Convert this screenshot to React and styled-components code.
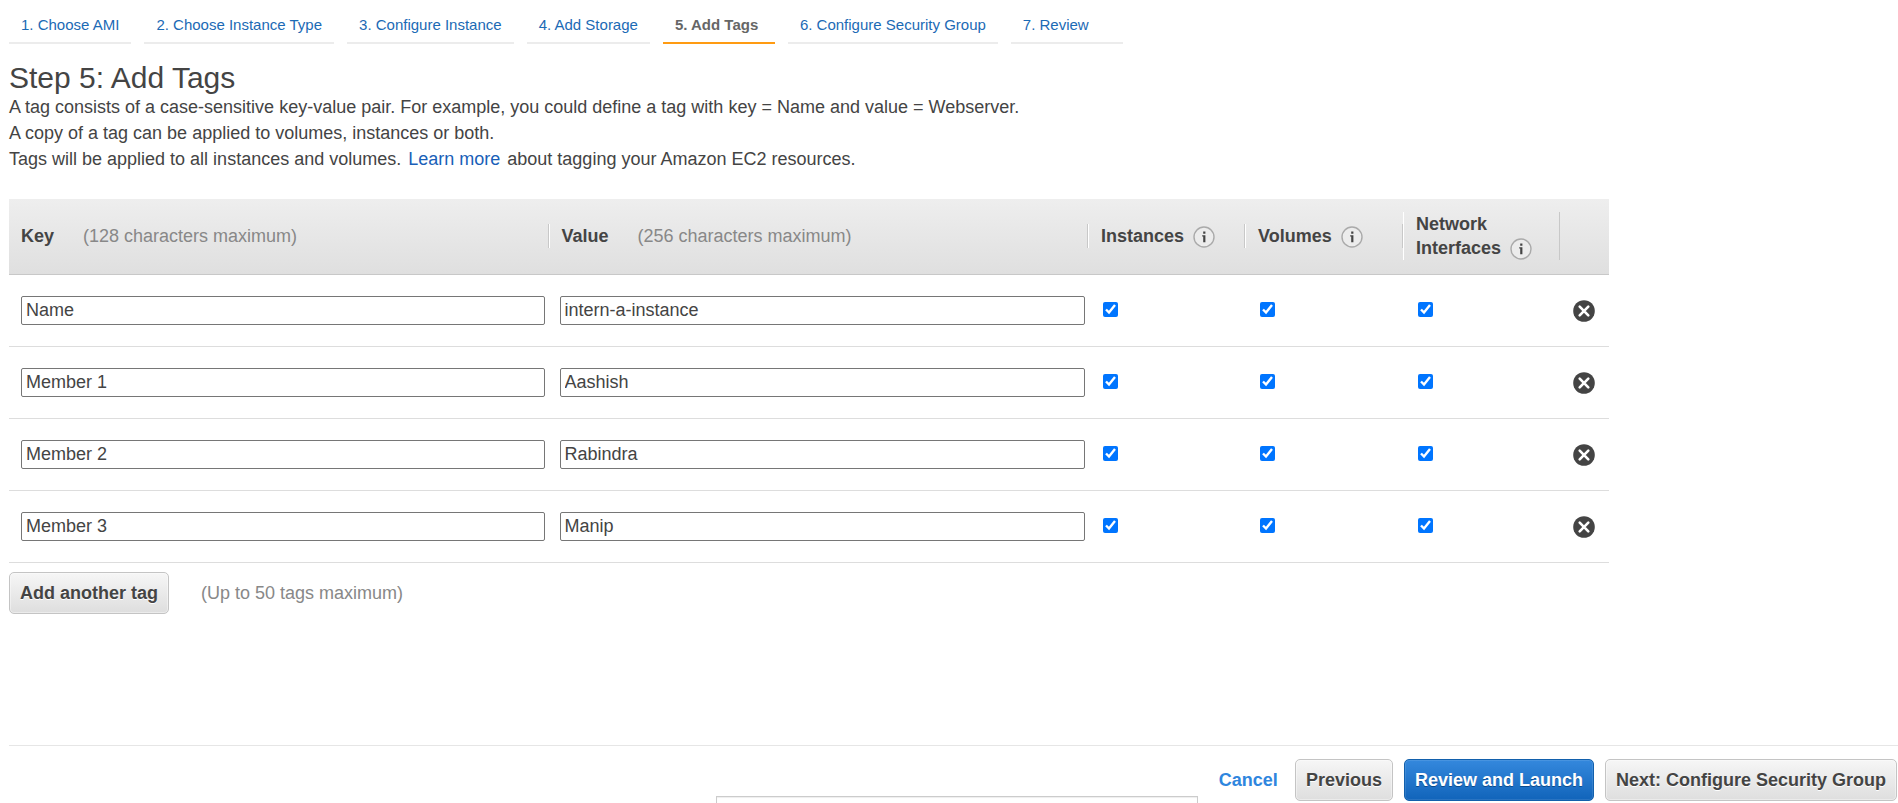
import React, { useState } from "react";
import styled, { createGlobalStyle, css } from "styled-components";

const GlobalStyle = createGlobalStyle`
  * { box-sizing: border-box; }
  body {
    margin: 0;
    background: #fff;
    color: #444;
    font-family: "Liberation Sans", Arial, sans-serif;
    font-size: 18px;
    line-height: 26px;
  }
`;

const Page = styled.div`
  display: flex;
  flex-direction: column;
  min-height: 100vh;
  padding-left: 9px;
`;

const Steps = styled.nav`
  display: flex;
  gap: 13px;
  padding-top: 7px;
`;

const StepLink = styled.a`
  min-width: 112px;
  padding: 6px 12px 5px;
  border-bottom: 2px solid ${(p) => (p.$active ? "#ff9b12" : "#ececec")};
  color: ${(p) => (p.$active ? "#666" : "#1b6ab5")};
  font-size: 15px;
  font-weight: ${(p) => (p.$active ? "bold" : "normal")};
  line-height: 24px;
  text-decoration: none;
  white-space: nowrap;
`;

const Main = styled.main`
  flex: 1;
  padding-top: 17px;
`;

const Title = styled.h1`
  margin: 0;
  font-size: 30px;
  font-weight: normal;
  line-height: 33px;
`;

const Intro = styled.p`
  margin: 0;
`;

const InlineLink = styled.a`
  margin: 0 2px;
  color: #1a5fb8;
  text-decoration: none;
`;

const TagTable = styled.table`
  width: 100%;
  max-width: 1600px;
  margin-top: 27px;
  border-collapse: separate;
  border-spacing: 0;
  table-layout: fixed;
`;

const Col = styled.col`
  width: ${(p) => p.$width};
`;

const HeaderRow = styled.tr`
  height: 76px;
  background: linear-gradient(#eee, #dfdfdf);
`;

const HeaderCell = styled.th`
  padding: 0 0 2px;
  border-bottom: 1px solid #c8c8c8;
  line-height: 24px;
  text-align: left;
`;

const HeaderLabel = styled.div`
  padding-left: 12px;
  border-left: ${(p) => (p.$first ? "0" : "1px solid #fff")};
  border-right: 1px solid #c8c8c8;
`;

const Hint = styled.span`
  margin-left: ${(p) => p.$gap || "29px"};
  color: #888;
  font-weight: normal;
`;

const InfoButton = styled.button`
  width: 22px;
  height: 22px;
  margin-left: 9px;
  padding: 0;
  border: 0;
  background: none;
  vertical-align: -6px;
  svg { display: block; }
`;

const Cell = styled.td`
  height: 72px;
  padding: ${(p) => p.$pad || "0"};
  border-bottom: 1px solid #ddd;
  vertical-align: middle;
`;

const TextField = styled.input`
  display: block;
  width: 100%;
  height: 29px;
  padding: 0 4px;
  border: 1px solid #767676;
  border-radius: 2px;
  color: #444;
  font: inherit;
`;

const Tick = styled.input`
  display: block;
  width: 15px;
  height: 15px;
  margin: 0;
  accent-color: #0075ff;
`;

const RemoveButton = styled.button`
  display: block;
  padding: 0;
  border: 0;
  background: none;
  svg { display: block; }
`;

const AddRow = styled.div`
  display: flex;
  align-items: center;
  margin-top: 9px;
`;

const Button = styled.button`
  height: 42px;
  padding: 0 10px;
  border: 1px solid #c4c4c4;
  border-radius: 5px;
  background: linear-gradient(#f6f6f6, #dedede);
  box-shadow: inset 0 0 0 1px rgba(255, 255, 255, 0.4);
  color: #444;
  font: bold 18px "Liberation Sans", Arial, sans-serif;
  text-shadow: 0 1px 0 #fff;
  white-space: nowrap;
  ${(p) =>
    p.$primary &&
    css`
      border-color: #1260ac;
      background: linear-gradient(#3488dd, #1164ba);
      box-shadow: inset 0 0 0 1px rgba(255, 255, 255, 0.1);
      color: #fff;
      text-shadow: 0 1px 0 #0b4a8c;
    `}
`;

const Footer = styled.footer`
  display: flex;
  align-items: center;
  justify-content: flex-end;
  gap: 11px;
  padding: 13px 1px 2px 0;
  border-top: 1px solid #e6e6e6;
`;

const CancelLink = styled.a`
  margin-right: 6px;
  color: #2f86de;
  font-weight: bold;
  text-decoration: none;
`;

const BottomPopup = styled.div`
  position: fixed;
  bottom: 0;
  left: 50%;
  width: 482px;
  height: 7px;
  margin-left: -233px;
  border: 1px solid #ccc;
  border-bottom: 0;
  background: #fff;
  box-shadow: inset 0 1px 1px #eee;
`;

const steps = [
  "1. Choose AMI",
  "2. Choose Instance Type",
  "3. Configure Instance",
  "4. Add Storage",
  "5. Add Tags",
  "6. Configure Security Group",
  "7. Review",
];

const initialTags = [
  { key: "Name", value: "intern-a-instance" },
  { key: "Member 1", value: "Aashish" },
  { key: "Member 2", value: "Rabindra" },
  { key: "Member 3", value: "Manip" },
];

const targets = ["Instances", "Volumes", "Network Interfaces"];

function Info({ about }) {
  return (
    <InfoButton type="button" aria-label={`About ${about}`}>
      <svg width="22" height="22" viewBox="0 0 22 22">
        <circle cx="11" cy="11" r="10" fill="#ececec" stroke="#aaa" strokeWidth="1.4" />
        <path d="M9.2 9.2h3.2v7h-2.2v-5.8h-1zM10.2 5.6h2.2v2.1h-2.2z" fill="#444" />
      </svg>
    </InfoButton>
  );
}

function RemoveIcon() {
  return (
    <svg width="22" height="22" viewBox="0 0 22 22">
      <circle cx="11" cy="11" r="10.8" fill="#444" />
      <path d="M6.7 6.7l8.6 8.6M15.3 6.7l-8.6 8.6" stroke="#fff" strokeWidth="2.6" strokeLinecap="round" />
    </svg>
  );
}

export default function App() {
  const [tags, setTags] = useState(initialTags);
  const update = (i, patch) =>
    setTags(tags.map((t, n) => (n === i ? { ...t, ...patch } : t)));

  return (
    <Page>
      <GlobalStyle />
      <Steps>
        {steps.map((s, i) => (
          <StepLink key={s} href="#" $active={i === 4}>
            {s}
          </StepLink>
        ))}
      </Steps>
      <Main>
        <Title>Step 5: Add Tags</Title>
        <Intro>
          A tag consists of a case-sensitive key-value pair. For example, you could define a tag with key = Name and value = Webserver.
        </Intro>
        <Intro>A copy of a tag can be applied to volumes, instances or both.</Intro>
        <Intro>
          Tags will be applied to all instances and volumes. <InlineLink href="#">Learn more</InlineLink> about tagging your Amazon EC2 resources.
        </Intro>
        <TagTable>
          <colgroup>
            <Col />
            <Col />
            <Col $width="157px" />
            <Col $width="158px" />
            <Col $width="157px" />
            <Col $width="49px" />
          </colgroup>
          <thead>
            <HeaderRow>
              <HeaderCell scope="col">
                <HeaderLabel $first>
                  Key<Hint>(128 characters maximum)</Hint>
                </HeaderLabel>
              </HeaderCell>
              <HeaderCell scope="col">
                <HeaderLabel>
                  Value<Hint>(256 characters maximum)</Hint>
                </HeaderLabel>
              </HeaderCell>
              {targets.map((t) => (
                <HeaderCell key={t} scope="col">
                  <HeaderLabel>
                    {t}
                    <Info about={t} />
                  </HeaderLabel>
                </HeaderCell>
              ))}
              <HeaderCell />
            </HeaderRow>
          </thead>
          <tbody>
            {tags.map((tag, i) => (
              <tr key={i}>
                <Cell $pad="0 4px 0 12px">
                  <TextField
                    aria-label="Key"
                    value={tag.key}
                    onChange={(e) => update(i, { key: e.target.value })}
                  />
                </Cell>
                <Cell $pad="0 3px 0 11px">
                  <TextField
                    aria-label="Value"
                    value={tag.value}
                    onChange={(e) => update(i, { value: e.target.value })}
                  />
                </Cell>
                {targets.map((t) => (
                  <Cell key={t} $pad="0 0 2px 15px">
                    <Tick type="checkbox" aria-label={t} defaultChecked />
                  </Cell>
                ))}
                <Cell $pad="0 0 0 13px">
                  <RemoveButton
                    type="button"
                    aria-label="Remove tag"
                    onClick={() => setTags(tags.filter((_, n) => n !== i))}
                  >
                    <RemoveIcon />
                  </RemoveButton>
                </Cell>
              </tr>
            ))}
          </tbody>
        </TagTable>
        <AddRow>
          <Button type="button" onClick={() => setTags([...tags, { key: "", value: "" }])}>
            Add another tag
          </Button>
          <Hint $gap="32px">(Up to 50 tags maximum)</Hint>
        </AddRow>
      </Main>
      <Footer>
        <CancelLink href="#">Cancel</CancelLink>
        <Button type="button">Previous</Button>
        <Button type="button" $primary>
          Review and Launch
        </Button>
        <Button type="button">Next: Configure Security Group</Button>
      </Footer>
      <BottomPopup />
    </Page>
  );
}
